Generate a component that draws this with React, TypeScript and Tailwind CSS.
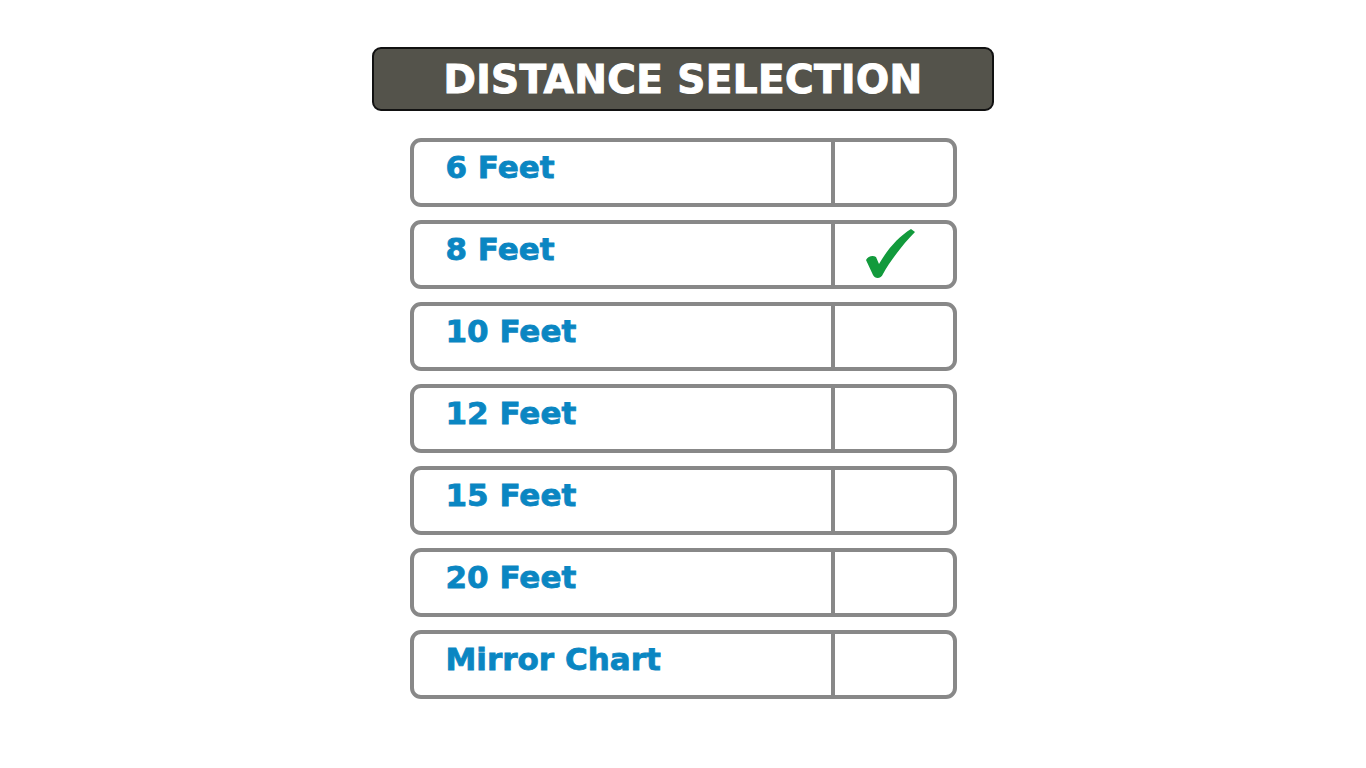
import React from 'react';

const OPTIONS = ['6 Feet', '8 Feet', '10 Feet', '12 Feet', '15 Feet', '20 Feet', 'Mirror Chart'];
const SELECTED = '8 Feet';

const Check = () => (
  <svg width="50" height="50" viewBox="0 0 50 50" className="block">
    <path
      d="M0,31 C2,27 7,26 10,28 L13,35 C21,21 32,8 45,0 L49,3 C38,14 24,32 17,45 C15,50 9,50 7,46 Z"
      fill="#129a3c"
    />
  </svg>
);

const OptionRow: React.FC<{ label: string; checked: boolean }> = ({ label, checked }) => (
  <div className="flex h-[69px] w-[547px] rounded-[11px] border-4 border-[#888888] bg-white">
    <div className="flex w-[417px] items-center pb-[10px] pl-[32px]">
      <span className="text-[31px] font-bold leading-none text-[#0a86c2] [-webkit-text-stroke:0.8px_#0a86c2]">
        {label}
      </span>
    </div>
    <div className="w-[4px] bg-[#888888]" />
    <div className="flex-1 pl-[31px] pt-[5px]">{checked && <Check />}</div>
  </div>
);

export default function App() {
  return (
    <div
      className="flex min-h-screen w-full flex-col items-center bg-white"
      style={{ fontFamily: '"DejaVu Sans", Verdana, sans-serif' }}
    >
      <div className="mt-[47px] flex h-[64px] w-[622px] items-center justify-center rounded-[9px] border-2 border-[#111111] bg-[#54534b]">
        <h1 className="text-[39px] font-bold leading-none tracking-[0.4px] text-white [-webkit-text-stroke:1px_#ffffff]">
          DISTANCE SELECTION
        </h1>
      </div>
      <div className="mt-[27px] flex flex-col gap-[13px]">
        {OPTIONS.map(o => (
          <OptionRow key={o} label={o} checked={o === SELECTED} />
        ))}
      </div>
    </div>
  );
}
